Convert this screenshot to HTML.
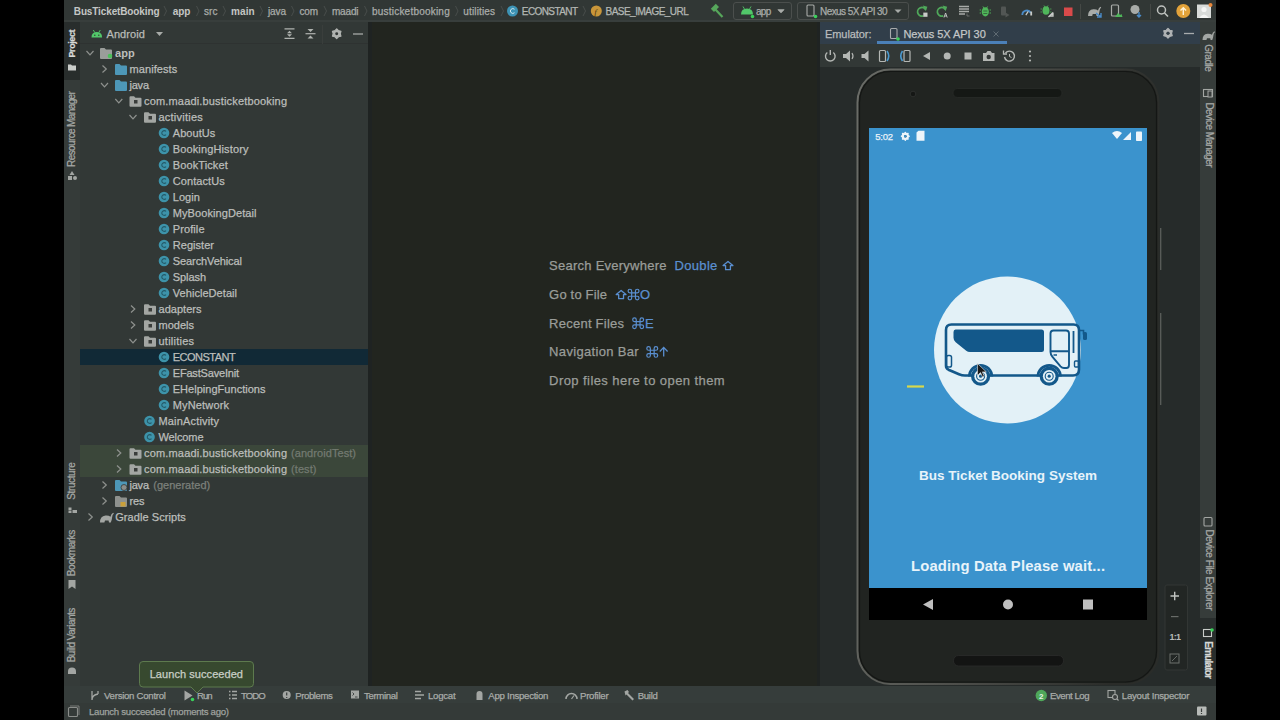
<!DOCTYPE html>
<html><head><meta charset="utf-8"><style>
html,body{margin:0;padding:0;width:1280px;height:720px;overflow:hidden;background:#000}
.r{position:absolute}
.t{position:absolute;white-space:nowrap;font-family:"Liberation Sans",sans-serif;-webkit-text-stroke:0.25px currentColor}
svg{position:absolute;left:0;top:0}
</style></head><body>
<div class="r" style="left:64px;top:0px;width:1152px;height:22px;background:#313735;"></div><div class="r" style="left:64px;top:20px;width:1152px;height:2px;background:#383e3c;"></div><div class="r" style="left:64px;top:22px;width:16px;height:664px;background:#353b39;"></div><div class="r" style="left:64px;top:22px;width:16px;height:58px;background:#282d2c;"></div><div class="r" style="left:80px;top:22px;width:288px;height:664px;background:#323836;"></div><div class="r" style="left:80px;top:43px;width:288px;height:1px;background:#2e3231;"></div><div class="r" style="left:80px;top:349px;width:288px;height:16px;background:#112936;"></div><div class="r" style="left:80px;top:445px;width:288px;height:32px;background:#3b473a;"></div><div class="r" style="left:368px;top:22px;width:452px;height:664px;background:#1f2322;"></div><div class="r" style="left:372px;top:22px;width:445px;height:664px;background:#22251f;"></div><div class="r" style="left:820px;top:22px;width:380px;height:22px;background:#313e4a;"></div><div class="r" style="left:877px;top:41px;width:130px;height:2.5px;background:#4b80b8;"></div><div class="r" style="left:820px;top:44px;width:380px;height:23px;background:#323836;"></div><div class="r" style="left:820px;top:67px;width:380px;height:619px;background:#262b2a;"></div><div class="r" style="left:1200px;top:22px;width:16px;height:664px;background:#363c3a;"></div><div class="r" style="left:1200px;top:618px;width:16px;height:68px;background:#282d2c;"></div><div class="r" style="left:64px;top:686px;width:1152px;height:17px;background:#363d3b;"></div><div class="r" style="left:64px;top:703px;width:1152px;height:17px;background:#343a38;"></div>
<svg width="1280" height="720"><polyline points="164,6 166.5,11 164,16" fill="none" stroke="#484d4b" stroke-width="1"/><polyline points="196.5,6 199.0,11 196.5,16" fill="none" stroke="#484d4b" stroke-width="1"/><polyline points="223,6 225.5,11 223,16" fill="none" stroke="#484d4b" stroke-width="1"/><polyline points="260,6 262.5,11 260,16" fill="none" stroke="#484d4b" stroke-width="1"/><polyline points="291.5,6 294.0,11 291.5,16" fill="none" stroke="#484d4b" stroke-width="1"/><polyline points="324,6 326.5,11 324,16" fill="none" stroke="#484d4b" stroke-width="1"/><polyline points="364.5,6 367.0,11 364.5,16" fill="none" stroke="#484d4b" stroke-width="1"/><polyline points="455.5,6 458.0,11 455.5,16" fill="none" stroke="#484d4b" stroke-width="1"/><polyline points="501,6 503.5,11 501,16" fill="none" stroke="#484d4b" stroke-width="1"/><polyline points="583,6 585.5,11 583,16" fill="none" stroke="#484d4b" stroke-width="1"/><circle cx="512.5" cy="11" r="5.5" fill="#3d93b5"/><path d="M514.5 9.3a2.4 2.4 0 1 0 0 3.4" fill="none" stroke="#cde6ee" stroke-width="1"/><circle cx="596.3" cy="11" r="5.5" fill="#c9963a"/><text x="594.3" y="14.5" font-family="Liberation Serif" font-style="italic" font-size="9" fill="#4a3610">f</text><path d="M715.5 9.5l7 7.5" stroke="#56a65b" stroke-width="2.2"/><path d="M710.8 8.8l5-5 3.2 3.2-5 5z" fill="#56a65b"/><rect x="733.5" y="2.5" width="58" height="17" rx="2.5" fill="none" stroke="#4b4f4d"/><path d="M741 14.5q0-6 6-6t6 6z" fill="#52c86a"/><path d="M743 6.5l1.4 2.4M751 6.5l-1.4 2.4" stroke="#52c86a" stroke-width="0.9"/><circle cx="752.5" cy="16.5" r="1.8" fill="#3ad15a"/><polyline points="777.5,9.5 781,13 784.5,9.5" fill="#a8aba8" stroke="none"/><path d="M777.5 9.5h7l-3.5 3.5z" fill="#a8aba8"/><rect x="797.5" y="2.5" width="111" height="17" rx="2.5" fill="none" stroke="#4b4f4d"/><rect x="807" y="5" width="7" height="11" rx="1" fill="none" stroke="#a8aba8" stroke-width="1.1"/><circle cx="815.5" cy="16.5" r="1.8" fill="#3ad15a"/><path d="M894.5 9.5h7l-3.5 3.5z" fill="#a8aba8"/><path d="M925.6 9.600000000000001A4.3 4.3 0 1 0 923.5 15.8" fill="none" stroke="#4fa85a" stroke-width="1.8"/><path d="M922.8 5.6000000000000005l4.6 1.2-1.6 4.4z" fill="#4fa85a"/><rect x="923.3" y="12.6" width="4.2" height="4.2" fill="#c9ccc9"/><path d="M945.4 9.600000000000001A4.3 4.3 0 1 0 943.3 15.8" fill="none" stroke="#4fa85a" stroke-width="1.8"/><path d="M942.5999999999999 5.6000000000000005l4.6 1.2-1.6 4.4z" fill="#4fa85a"/><path d="M944 17.5l1.6-4.5 1.6 4.5M944.6 16h2" fill="none" stroke="#c9ccc9" stroke-width="0.9"/><path d="M959 6.5h10M959 9h10M959 11.5h10M959 14h6" stroke="#a8aba8" stroke-width="1.3"/><path d="M967 13.5v2.5h2.5" fill="none" stroke="#6f7370" stroke-width="0.9"/><ellipse cx="985.3" cy="11.8" rx="3.6" ry="4.6" fill="#4fb65a"/><path d="M983 6.5l1 1.5M987.6 6.5l-1 1.5M981 10h-1.3M981 13h-1.3M989.6 10h1.3M989.6 13h1.3" stroke="#4fb65a" stroke-width="1"/><path d="M983.3 11h4M983.3 13.5h4" stroke="#2e4a30" stroke-width="0.7"/><rect x="1001" y="6.5" width="5" height="9" rx="1" fill="#525654"/><path d="M1005.5 12.5l4 2.5-4 2.5z" fill="#525654"/><path d="M1022.3 15a4.5 4.5 0 0 1 8.5-2" fill="none" stroke="#4a8bc8" stroke-width="1.8"/><path d="M1025.8 15.2l2.5-3.8" stroke="#c9ccc9" stroke-width="1.2"/><rect x="1030.3" y="11.5" width="1.8" height="4" fill="#c9ccc9"/><ellipse cx="1046" cy="10.5" rx="3.5" ry="4.3" fill="#4fb65a"/><path d="M1041.8 9h-1.2M1041.8 12h-1.2M1050.2 9h1.2M1050.2 12h1.2M1044 5.5l.8 1.3M1048 5.5l-.8 1.3" stroke="#4fb65a" stroke-width="0.9"/><path d="M1048.5 17l4.5-4.5M1053 12.5v3.5h-3.5" stroke="#c9ccc9" stroke-width="1.3" fill="none"/><rect x="1064" y="7.5" width="8.5" height="8.5" fill="#d94a4a"/><path d="M1080.5 4v15" stroke="#454946" stroke-width="1"/><path transform="translate(1088 16) scale(0.95)" d="M0 0q0-6.5 5.5-7q3.2-.3 5 1.2q.6-2.8 2.6-4l.8.9q-1.6 1.2-1.8 3.8q-.2 2.2-1.3 5.1h-1.8l-.4-2h-3.6l-.6 2z" fill="#a8aba8"/><path d="M0 0" fill="none"/><path d="M1096 13l5 4M1101 13v4h-4" stroke="#4a8bc8" stroke-width="1.4" fill="none"/><rect x="1111.5" y="5" width="7" height="11" rx="1" fill="none" stroke="#a8aba8" stroke-width="1.2"/><path d="M1115 17l3-4 2 2 1.5-1 1 3z" fill="#4fb65a"/><circle cx="1135" cy="9.5" r="4.5" fill="#a8aba8"/><path d="M1139 12v5M1137 15l2 2 2-2" stroke="#4a8bc8" stroke-width="1.4" fill="none"/><path d="M1150.5 4v15" stroke="#454946" stroke-width="1"/><circle cx="1161.5" cy="10" r="4" fill="none" stroke="#bfc2bf" stroke-width="1.5"/><path d="M1164.5 13l3.5 3.5" stroke="#bfc2bf" stroke-width="1.6"/><circle cx="1183.3" cy="11" r="7" fill="#e3a33a"/><path d="M1183.3 15v-7M1180.5 10.5l2.8-2.8 2.8 2.8" stroke="#fff3d6" stroke-width="1.4" fill="none"/><rect x="1197" y="4.5" width="14" height="13.5" fill="#d8dbd9"/><circle cx="1204" cy="9.5" r="2.6" fill="#f4f5f4"/><path d="M1199 18q5-7 10 0z" fill="#f4f5f4"/><circle cx="1210.5" cy="5" r="2" fill="#e8873a"/><path d="M68 64.5h3l1 1h4v5h-8z" fill="#c9ccc9"/><path d="M72 171l2.5 4h-5z" fill="#a3a6a3"/><rect x="68" y="176" width="4" height="4" fill="#a3a6a3"/><circle cx="75" cy="178" r="2" fill="#a3a6a3"/><rect x="68.5" y="507.5" width="3" height="3" fill="#a3a6a3"/><rect x="72.5" y="510" width="4.5" height="3" fill="#a3a6a3"/><rect x="68.5" y="511" width="3" height="2" fill="#a3a6a3"/><path d="M68.5 580h7v9l-3.5-2.5-3.5 2.5z" fill="#a3a6a3"/><path d="M68 674v-2.5a4 4 0 0 1 8 0v2.5z" fill="#a3a6a3"/><path d="M91.5 37.5q0-5.5 5.3-5.5t5.3 5.5z" fill="#52c86a"/><path d="M93.3 30l1.3 2.2M100.3 30l-1.3 2.2" stroke="#52c86a" stroke-width="0.9"/><circle cx="94.8" cy="35.3" r="0.7" fill="#333"/><circle cx="98.8" cy="35.3" r="0.7" fill="#333"/><path d="M156 32h7l-3.5 4z" fill="#a8aba8"/><path d="M284.5 28.9h10M284.5 38.4h10" stroke="#b0b3b0" stroke-width="1.2"/><path d="M287 33.2l2.5-2.5 2.5 2.5zM287 34.3l2.5 2.5 2.5-2.5z" fill="#b0b3b0"/><path d="M305.5 33.7h10" stroke="#b0b3b0" stroke-width="1.2"/><path d="M307.5 29h6l-3 3zM307.5 38.5h6l-3-3z" fill="#b0b3b0"/><path d="M322.5 25v19" stroke="#3a3e3c"/><polygon points="336.70,28.80 338.46,30.64 340.94,31.25 340.23,33.70 340.94,36.15 338.46,36.76 336.70,38.60 334.94,36.76 332.46,36.15 333.17,33.70 332.46,31.25 334.94,30.64" fill="#b0b3b0" stroke="#b0b3b0" stroke-width="1.2" stroke-linejoin="round"/><circle cx="336.7" cy="33.7" r="1.47" fill="#333736"/><path d="M353 34h10" stroke="#a8aba8" stroke-width="1.3"/><polyline points="86.5,51 90.0,54.8 93.5,51" fill="none" stroke="#8e918e" stroke-width="1.2"/><path d="M100 49.0q0-1 1-1h3.5l1.5 1.5h5q1 0 1 1v7.5q0 1-1 1h-10q-1 0-1-1z" fill="#9a9d9a"/><circle cx="110" cy="56" r="2.3" fill="#4bc05a"/><polyline points="102.5,65.5 106.3,69 102.5,72.5" fill="none" stroke="#8e918e" stroke-width="1.2"/><path d="M115 65.0q0-1 1-1h3.5l1.5 1.5h5q1 0 1 1v7.5q0 1-1 1h-10q-1 0-1-1z" fill="#4d97b8"/><polyline points="101,83 104.5,86.8 108,83" fill="none" stroke="#8e918e" stroke-width="1.2"/><path d="M115 81.0q0-1 1-1h3.5l1.5 1.5h5q1 0 1 1v7.5q0 1-1 1h-10q-1 0-1-1z" fill="#4d97b8"/><polyline points="115.3,99 118.8,102.8 122.3,99" fill="none" stroke="#8e918e" stroke-width="1.2"/><path d="M129.5 97.25q0-1 1-1h3.5l1.5 1.5h5q1 0 1 1v7.0q0 1-1 1h-10q-1 0-1-1z" fill="#a3a6a3"/><rect x="134.0" y="100" width="3.5" height="3.5" fill="#3a3d3b"/><polyline points="129.5,115 133.0,118.8 136.5,115" fill="none" stroke="#8e918e" stroke-width="1.2"/><path d="M144 113.25q0-1 1-1h3.5l1.5 1.5h5q1 0 1 1v7.0q0 1-1 1h-10q-1 0-1-1z" fill="#a3a6a3"/><rect x="148.5" y="116" width="3.5" height="3.5" fill="#3a3d3b"/><circle cx="164" cy="133" r="5.3" fill="#3d93aa"/><path d="M166 131.4a2.4 2.4 0 1 0 0 3.2" fill="none" stroke="#245a69" stroke-width="1.1"/><circle cx="164" cy="149" r="5.3" fill="#3d93aa"/><path d="M166 147.4a2.4 2.4 0 1 0 0 3.2" fill="none" stroke="#245a69" stroke-width="1.1"/><circle cx="164" cy="165" r="5.3" fill="#3d93aa"/><path d="M166 163.4a2.4 2.4 0 1 0 0 3.2" fill="none" stroke="#245a69" stroke-width="1.1"/><circle cx="164" cy="181" r="5.3" fill="#3d93aa"/><path d="M166 179.4a2.4 2.4 0 1 0 0 3.2" fill="none" stroke="#245a69" stroke-width="1.1"/><circle cx="164" cy="197" r="5.3" fill="#3d93aa"/><path d="M166 195.4a2.4 2.4 0 1 0 0 3.2" fill="none" stroke="#245a69" stroke-width="1.1"/><circle cx="164" cy="213" r="5.3" fill="#3d93aa"/><path d="M166 211.4a2.4 2.4 0 1 0 0 3.2" fill="none" stroke="#245a69" stroke-width="1.1"/><circle cx="164" cy="229" r="5.3" fill="#3d93aa"/><path d="M166 227.4a2.4 2.4 0 1 0 0 3.2" fill="none" stroke="#245a69" stroke-width="1.1"/><circle cx="164" cy="245" r="5.3" fill="#3d93aa"/><path d="M166 243.4a2.4 2.4 0 1 0 0 3.2" fill="none" stroke="#245a69" stroke-width="1.1"/><circle cx="164" cy="261" r="5.3" fill="#3d93aa"/><path d="M166 259.4a2.4 2.4 0 1 0 0 3.2" fill="none" stroke="#245a69" stroke-width="1.1"/><circle cx="164" cy="277" r="5.3" fill="#3d93aa"/><path d="M166 275.4a2.4 2.4 0 1 0 0 3.2" fill="none" stroke="#245a69" stroke-width="1.1"/><circle cx="164" cy="293" r="5.3" fill="#3d93aa"/><path d="M166 291.4a2.4 2.4 0 1 0 0 3.2" fill="none" stroke="#245a69" stroke-width="1.1"/><circle cx="164" cy="357" r="5.3" fill="#3d93aa"/><path d="M166 355.4a2.4 2.4 0 1 0 0 3.2" fill="none" stroke="#245a69" stroke-width="1.1"/><circle cx="164" cy="373" r="5.3" fill="#3d93aa"/><path d="M166 371.4a2.4 2.4 0 1 0 0 3.2" fill="none" stroke="#245a69" stroke-width="1.1"/><circle cx="164" cy="389" r="5.3" fill="#3d93aa"/><path d="M166 387.4a2.4 2.4 0 1 0 0 3.2" fill="none" stroke="#245a69" stroke-width="1.1"/><circle cx="164" cy="405" r="5.3" fill="#3d93aa"/><path d="M166 403.4a2.4 2.4 0 1 0 0 3.2" fill="none" stroke="#245a69" stroke-width="1.1"/><polyline points="131,305.5 134.8,309 131,312.5" fill="none" stroke="#8e918e" stroke-width="1.2"/><path d="M144 305.25q0-1 1-1h3.5l1.5 1.5h5q1 0 1 1v7.0q0 1-1 1h-10q-1 0-1-1z" fill="#a3a6a3"/><rect x="148.5" y="308" width="3.5" height="3.5" fill="#3a3d3b"/><polyline points="131,321.5 134.8,325 131,328.5" fill="none" stroke="#8e918e" stroke-width="1.2"/><path d="M144 321.25q0-1 1-1h3.5l1.5 1.5h5q1 0 1 1v7.0q0 1-1 1h-10q-1 0-1-1z" fill="#a3a6a3"/><rect x="148.5" y="324" width="3.5" height="3.5" fill="#3a3d3b"/><polyline points="129.5,339 133.0,342.8 136.5,339" fill="none" stroke="#8e918e" stroke-width="1.2"/><path d="M144 337.25q0-1 1-1h3.5l1.5 1.5h5q1 0 1 1v7.0q0 1-1 1h-10q-1 0-1-1z" fill="#a3a6a3"/><rect x="148.5" y="340" width="3.5" height="3.5" fill="#3a3d3b"/><circle cx="149.5" cy="421" r="5.3" fill="#3d93aa"/><path d="M151.5 419.4a2.4 2.4 0 1 0 0 3.2" fill="none" stroke="#245a69" stroke-width="1.1"/><circle cx="149.5" cy="437" r="5.3" fill="#3d93aa"/><path d="M151.5 435.4a2.4 2.4 0 1 0 0 3.2" fill="none" stroke="#245a69" stroke-width="1.1"/><polyline points="117,449.5 120.8,453 117,456.5" fill="none" stroke="#8e918e" stroke-width="1.2"/><path d="M129.5 449.25q0-1 1-1h3.5l1.5 1.5h5q1 0 1 1v7.0q0 1-1 1h-10q-1 0-1-1z" fill="#a3a6a3"/><rect x="134.0" y="452" width="3.5" height="3.5" fill="#3a3d3b"/><polyline points="117,465.5 120.8,469 117,472.5" fill="none" stroke="#8e918e" stroke-width="1.2"/><path d="M129.5 465.25q0-1 1-1h3.5l1.5 1.5h5q1 0 1 1v7.0q0 1-1 1h-10q-1 0-1-1z" fill="#a3a6a3"/><rect x="134.0" y="468" width="3.5" height="3.5" fill="#3a3d3b"/><polyline points="102.5,481.5 106.3,485 102.5,488.5" fill="none" stroke="#8e918e" stroke-width="1.2"/><path d="M115 481.0q0-1 1-1h3.5l1.5 1.5h5q1 0 1 1v7.5q0 1-1 1h-10q-1 0-1-1z" fill="#4d97b8"/><circle cx="124" cy="487.5" r="3" fill="#8a8d8a" stroke="#333736" stroke-width="0.8"/><polyline points="102.5,497.5 106.3,501 102.5,504.5" fill="none" stroke="#8e918e" stroke-width="1.2"/><path d="M115 497.0q0-1 1-1h3.5l1.5 1.5h5q1 0 1 1v7.5q0 1-1 1h-10q-1 0-1-1z" fill="#8e918e"/><rect x="120.5" y="502" width="5" height="4.5" fill="#c9a03a"/><polyline points="88.5,513.5 92.3,517 88.5,520.5" fill="none" stroke="#8e918e" stroke-width="1.2"/><path transform="translate(100 522.5) scale(1.0)" d="M0 0q0-6.5 5.5-7q3.2-.3 5 1.2q.6-2.8 2.6-4l.8.9q-1.6 1.2-1.8 3.8q-.2 2.2-1.3 5.1h-1.8l-.4-2h-3.6l-.6 2z" fill="#a3a6a3"/><path d="M143 661.5h107q3.5 0 3.5 3.5v18.5q0 3.5-3.5 3.5h-47l-6 6-6-6h-48q-3.5 0-3.5-3.5v-18.5q0-3.5 3.5-3.5z" fill="#37492f" stroke="#5d7a4e" stroke-width="1"/><path d="M92 691v9M92 700q0-5 6-6M98 691v3" fill="none" stroke="#a3a6a3" stroke-width="1.3"/><path d="M184.5 690.5l8 5-8 5z" fill="#a3a6a3"/><circle cx="192.5" cy="699.5" r="1.8" fill="#3ad15a"/><path d="M229 691.5h1.5M229 695h1.5M229 698.5h1.5M232 691.5h5M232 695h5M232 698.5h5" stroke="#a3a6a3" stroke-width="1.3"/><circle cx="286.7" cy="695" r="4" fill="#a3a6a3"/><path d="M286.7 692.5v3M286.7 697v1" stroke="#393d3c" stroke-width="1.2"/><rect x="351" y="690.5" width="8" height="8" fill="#a3a6a3"/><path d="M352.5 692.5l1.5 1.5-1.5 1.5M355 697h2.5" stroke="#393d3c" stroke-width="0.9" fill="none"/><path d="M415 691.5h6M415 695h9M415 698.5h6" stroke="#a3a6a3" stroke-width="1.3"/><path d="M476.5 700v-6q0-3 3-3t3 3v6z" fill="#a3a6a3"/><path d="M566 699a5.5 5.5 0 0 1 11 0" fill="none" stroke="#a3a6a3" stroke-width="1.5"/><path d="M571.5 699l2.5-3.5" stroke="#a3a6a3" stroke-width="1.2"/><path d="M624.5 691.5l3-1.5 1.5 2-1 1 6 6-1.5 1.5-6-6-1 1z" fill="#a3a6a3"/><circle cx="1041.3" cy="695.5" r="5.7" fill="#4fa85a"/><text x="1039" y="698.5" font-size="8" font-weight="bold" font-family="Liberation Sans" fill="#e8f4e8">2</text><rect x="1108" y="690.5" width="7" height="7" fill="none" stroke="#a3a6a3" stroke-width="1.1"/><circle cx="1115" cy="697" r="2.5" fill="#393d3c" stroke="#a3a6a3" stroke-width="1.1"/><path d="M1117 699l1.5 1.5" stroke="#a3a6a3" stroke-width="1.1"/><rect x="68.5" y="707.5" width="9" height="9" rx="1" fill="none" stroke="#8a8d8a" stroke-width="1.1"/><path d="M70 706h9v9" fill="none" stroke="#8a8d8a" stroke-width="0.8"/><rect x="1197" y="706.5" width="9.5" height="9" rx="1" fill="#b8bbb8"/><path d="M1201.5 708.5v3.5M1201.5 713v1" stroke="#393d3c" stroke-width="1.2"/><rect x="890.5" y="28.5" width="6.5" height="10" rx="1" fill="none" stroke="#a8abad" stroke-width="1.1"/><circle cx="898" cy="39" r="1.8" fill="#3ad15a"/><path d="M993.5 31.5l5 5M998.5 31.5l-5 5" stroke="#5f6a72" stroke-width="1"/><polygon points="1168.00,28.40 1169.76,30.24 1172.24,30.85 1171.53,33.30 1172.24,35.75 1169.76,36.36 1168.00,38.20 1166.24,36.36 1163.76,35.75 1164.47,33.30 1163.76,30.85 1166.24,30.24" fill="#b0b3b5" stroke="#b0b3b5" stroke-width="1.2" stroke-linejoin="round"/><circle cx="1168" cy="33.3" r="1.47" fill="#333736"/><circle cx="1168" cy="33.3" r="1.5" fill="#34404a"/><path d="M1184 33.5h10" stroke="#a8abad" stroke-width="1.3"/><path d="M827.3 52.5a4.8 4.8 0 1 0 6 0M830.3 50v5" fill="none" stroke="#b4b7b4" stroke-width="1.4"/><path d="M843 54h3l4-3.5v11l-4-3.5h-3z" fill="#b4b7b4"/><path d="M852 53q2 3 0 6" fill="none" stroke="#b4b7b4" stroke-width="1.2"/><path d="M861.5 54h3l4-3.5v11l-4-3.5h-3z" fill="#b4b7b4"/><rect x="879.5" y="50.5" width="6" height="11" rx="1" fill="none" stroke="#b4b7b4" stroke-width="1.2"/><path d="M887 51q3.5 5 0 10" fill="none" stroke="#4a9ad0" stroke-width="1.6"/><rect x="904" y="50.5" width="6" height="11" rx="1" fill="none" stroke="#b4b7b4" stroke-width="1.2"/><path d="M902.5 51q-3.5 5 0 10" fill="none" stroke="#4a9ad0" stroke-width="1.6"/><path d="M930 52v8l-7-4z" fill="#b4b7b4"/><circle cx="947.2" cy="56" r="3.5" fill="#b4b7b4"/><rect x="964.5" y="52.5" width="7" height="7" fill="#b4b7b4"/><path d="M983 53h3l1.5-2h3l1.5 2h2.5v8h-11.5z" fill="#b4b7b4"/><circle cx="988.7" cy="57" r="2.2" fill="#343837"/><path d="M1005.5 53a5 5 0 1 1 -1 4" fill="none" stroke="#b4b7b4" stroke-width="1.4"/><path d="M1003.5 50.5v3.5h3.5" fill="none" stroke="#b4b7b4" stroke-width="1.3"/><path d="M1009.5 54v2.5l2 1" fill="none" stroke="#b4b7b4" stroke-width="1"/><circle cx="1030" cy="51.5" r="1.1" fill="#b4b7b4"/><circle cx="1030" cy="56" r="1.1" fill="#b4b7b4"/><circle cx="1030" cy="60.5" r="1.1" fill="#b4b7b4"/><path transform="translate(1202.5 40) scale(0.9)" d="M0 0q0-6.5 5.5-7q3.2-.3 5 1.2q.6-2.8 2.6-4l.8.9q-1.6 1.2-1.8 3.8q-.2 2.2-1.3 5.1h-1.8l-.4-2h-3.6l-.6 2z" fill="#a3a6a3"/><rect x="1203.5" y="89.5" width="9" height="7" fill="none" stroke="#a3a6a3" stroke-width="1.1"/><rect x="1208" y="91" width="4" height="6" fill="#393d3c" stroke="#a3a6a3" stroke-width="1"/><rect x="1204" y="517.5" width="8" height="8.5" rx="1" fill="none" stroke="#a3a6a3" stroke-width="1.1"/><rect x="1203.5" y="629.5" width="8" height="7" fill="none" stroke="#c9ccc9" stroke-width="1.1"/><circle cx="1212" cy="630" r="1.8" fill="#3ad15a"/><defs><linearGradient id="rim" x1="0" y1="0" x2="1" y2="0.2"><stop offset="0" stop-color="#6a6c67"/><stop offset="0.5" stop-color="#4e4f4b"/><stop offset="1" stop-color="#2a2c29"/></linearGradient></defs><rect x="857.5" y="69.5" width="301" height="614.5" rx="33" fill="#212421" stroke="url(#rim)" stroke-width="2"/><rect x="859.5" y="71.5" width="297" height="610.5" rx="31" fill="none" stroke="#141614" stroke-width="1.2"/><rect x="953" y="88.5" width="109" height="9" rx="4.5" fill="#151815" stroke="#282b28" stroke-width="0.8"/><circle cx="913" cy="94" r="2.8" fill="#151715" stroke="#2c2e2c" stroke-width="1"/><rect x="953.5" y="655.5" width="110" height="10.5" rx="5" fill="#131413" stroke="#2b2c2b" stroke-width="0.8"/><path d="M1160.7 228v42M1160.7 313v92" stroke="#5b5e5b" stroke-width="1.3"/><rect x="869" y="128" width="278" height="460" fill="#3b93cd"/><rect x="869" y="588" width="278" height="32" fill="#000"/><path d="M933 599v11l-10-5.5z" fill="#bfbfbf"/><circle cx="1008" cy="604.5" r="5" fill="#bfbfbf"/><rect x="1083" y="599.5" width="10" height="10" fill="#bfbfbf"/><polygon points="905.30,132.30 906.40,133.64 908.13,133.47 907.96,135.20 909.30,136.30 907.96,137.40 908.13,139.13 906.40,138.96 905.30,140.30 904.20,138.96 902.47,139.13 902.64,137.40 901.30,136.30 902.64,135.20 902.47,133.47 904.20,133.64" fill="#eef5fa" stroke="#eef5fa" stroke-width="1.2" stroke-linejoin="round"/><circle cx="905.3" cy="136.3" r="1.20" fill="#333736"/><circle cx="905.3" cy="136.3" r="1.3" fill="#3b93cd"/><path d="M916.5 132.5l2-1.8h6v10h-8z" fill="#eef5fa"/><path d="M1112 133q5-4 10 0l-5 6z" fill="#eef5fa"/><path d="M1123 140l8-8v8z" fill="#eef5fa"/><rect x="1136" y="131.5" width="6" height="9.5" rx="0.8" fill="#eef5fa"/><circle cx="1007.5" cy="350" r="73.5" fill="#e3f1f7"/><path d="M951.5 324.5h122q5.5 0 5.5 5.5v39.5q0 6-6 6h-108q-3 0-6-1.3l-10.5-4.5q-2.5-1.2-2.5-4v-35.7q0-5.5 5.5-5.5z" fill="none" stroke="#13588a" stroke-width="2.6"/><path d="M955.5 329.5h86q2.5 0 2.5 2.5v17.5q0 2.5-2.5 2.5h-71.5q-2.2 0-3.8-1.3l-10.5-8.5q-2.2-1.8-2.2-4.5v-5.7q0-2.5 2-2.5z" fill="#13588a"/><path d="M1050.5 352v-18.5q0-3 3-3h12.5q3 0 3 3v31.5q0 3-2.5 3h-2.5q-2 0-3.5-1.7l-8-9.5q-2-2.3-2-4.8z M1050.5 351.3h18.5" fill="none" stroke="#13588a" stroke-width="1.9"/><path d="M1053.5 355h3.5" stroke="#13588a" stroke-width="1.5"/><path d="M1073.5 331v22" stroke="#13588a" stroke-width="1.8"/><rect x="1074.5" y="361" width="4" height="6" rx="1" fill="none" stroke="#13588a" stroke-width="1.4"/><path d="M1078 330.5h5.5v4" fill="none" stroke="#13588a" stroke-width="1.6"/><rect x="1083" y="332" width="4" height="8" rx="1.5" fill="#13588a"/><rect x="946.5" y="355.5" width="5" height="11.5" rx="1.8" fill="none" stroke="#13588a" stroke-width="1.5"/><path d="M969.4 376.5a11.2 11.2 0 0 1 22.4 0" fill="none" stroke="#13588a" stroke-width="2.8"/><circle cx="980.6" cy="376.2" r="9.6" fill="#13588a"/><circle cx="980.6" cy="376.2" r="6.3" fill="#e3f1f7"/><circle cx="980.6" cy="376.2" r="4" fill="none" stroke="#13588a" stroke-width="1.1"/><circle cx="980.6" cy="376.2" r="1.6" fill="#13588a"/><path d="M1038.0 376.5a11.2 11.2 0 0 1 22.4 0" fill="none" stroke="#13588a" stroke-width="2.8"/><circle cx="1049.2" cy="376.2" r="9.6" fill="#13588a"/><circle cx="1049.2" cy="376.2" r="6.3" fill="#e3f1f7"/><circle cx="1049.2" cy="376.2" r="4" fill="none" stroke="#13588a" stroke-width="1.1"/><circle cx="1049.2" cy="376.2" r="1.6" fill="#13588a"/><path d="M977.5 363.5v12l3-3 2 4.5 1.8-.8-2-4.3h4z" fill="#1a1a1a" stroke="#e8e8e8" stroke-width="0.6"/><path d="M907 386.5h17" stroke="#d8d84c" stroke-width="2.2"/><path d="M728.0 261.40000000000003L732.9 265.55H730.42V269.7H725.58V265.55H723.1Z" fill="none" stroke="#5a8fd0" stroke-width="1.3" stroke-linejoin="round"/><path d="M621.1 290.40000000000003L626.0 294.55H623.52V298.7H618.6800000000001V294.55H616.2Z" fill="none" stroke="#5a8fd0" stroke-width="1.3" stroke-linejoin="round"/><path d="M631.66 292.84000000000003H635.4399999999999V296.26H631.66Z M631.66 292.84000000000003V291.055 A1.7850000000000001 1.7850000000000001 0 1 0 629.875 292.84000000000003H631.66 M635.4399999999999 292.84000000000003V291.055 A1.7850000000000001 1.7850000000000001 0 1 1 637.2249999999999 292.84000000000003H635.4399999999999 M631.66 296.26V298.045 A1.7850000000000001 1.7850000000000001 0 1 1 629.875 296.26H631.66 M635.4399999999999 296.26V298.045 A1.7850000000000001 1.7850000000000001 0 1 0 637.2249999999999 296.26H635.4399999999999" fill="none" stroke="#5a8fd0" stroke-width="1.2"/><path d="M636.26 321.54H640.04V324.96H636.26Z M636.26 321.54V319.755 A1.7850000000000001 1.7850000000000001 0 1 0 634.475 321.54H636.26 M640.04 321.54V319.755 A1.7850000000000001 1.7850000000000001 0 1 1 641.8249999999999 321.54H640.04 M636.26 324.96V326.745 A1.7850000000000001 1.7850000000000001 0 1 1 634.475 324.96H636.26 M640.04 324.96V326.745 A1.7850000000000001 1.7850000000000001 0 1 0 641.8249999999999 324.96H640.04" fill="none" stroke="#5a8fd0" stroke-width="1.2"/><path d="M650.36 350.24H654.14V353.65999999999997H650.36Z M650.36 350.24V348.455 A1.7850000000000001 1.7850000000000001 0 1 0 648.575 350.24H650.36 M654.14 350.24V348.455 A1.7850000000000001 1.7850000000000001 0 1 1 655.925 350.24H654.14 M650.36 353.65999999999997V355.445 A1.7850000000000001 1.7850000000000001 0 1 1 648.575 353.65999999999997H650.36 M654.14 353.65999999999997V355.445 A1.7850000000000001 1.7850000000000001 0 1 0 655.925 353.65999999999997H654.14" fill="none" stroke="#5a8fd0" stroke-width="1.2"/><path d="M663.7 356.5V347.8M659.8 351.5L663.7 347.4L667.6 351.5" fill="none" stroke="#5a8fd0" stroke-width="1.3"/><rect x="1165" y="585" width="22.5" height="85" rx="2" fill="#222624" stroke="#323634" stroke-width="1"/><path d="M1170.5 596h8.5M1174.7 591.7v8.5" stroke="#c0c3c0" stroke-width="1.4"/><path d="M1171 616.6h7.5" stroke="#686b68" stroke-width="1.2"/><rect x="1170" y="654" width="9" height="9" fill="none" stroke="#6d706d" stroke-width="1"/><path d="M1172 661l5-5" stroke="#6d706d" stroke-width="0.9"/></svg>
<div class="t" style="left:73.80px;top:6.63px;font-size:10px;line-height:10px;font-weight:bold;color:#c4c6c4;letter-spacing:-0.127px;-webkit-text-stroke:0;">BusTicketBooking</div>
<div class="t" style="left:172.70px;top:6.63px;font-size:10px;line-height:10px;font-weight:bold;color:#c4c6c4;letter-spacing:-0.039px;-webkit-text-stroke:0;">app</div>
<div class="t" style="left:204.00px;top:6.63px;font-size:10px;line-height:10px;font-weight:normal;color:#a9aca9;letter-spacing:0.085px;">src</div>
<div class="t" style="left:231.00px;top:6.63px;font-size:10px;line-height:10px;font-weight:bold;color:#c4c6c4;letter-spacing:0.087px;-webkit-text-stroke:0;">main</div>
<div class="t" style="left:267.90px;top:6.63px;font-size:10px;line-height:10px;font-weight:normal;color:#a9aca9;letter-spacing:-0.082px;">java</div>
<div class="t" style="left:299.40px;top:6.63px;font-size:10px;line-height:10px;font-weight:normal;color:#a9aca9;letter-spacing:-0.146px;">com</div>
<div class="t" style="left:331.90px;top:6.63px;font-size:10px;line-height:10px;font-weight:normal;color:#a9aca9;letter-spacing:-0.134px;">maadi</div>
<div class="t" style="left:372.00px;top:6.63px;font-size:10px;line-height:10px;font-weight:normal;color:#a9aca9;letter-spacing:0.214px;">busticketbooking</div>
<div class="t" style="left:463.30px;top:6.63px;font-size:10px;line-height:10px;font-weight:normal;color:#a9aca9;letter-spacing:0.142px;">utilities</div>
<div class="t" style="left:521.80px;top:6.63px;font-size:10px;line-height:10px;font-weight:normal;color:#b4b7b4;letter-spacing:-0.591px;">ECONSTANT</div>
<div class="t" style="left:605.50px;top:6.63px;font-size:10px;line-height:10px;font-weight:normal;color:#b4b7b4;letter-spacing:-0.518px;">BASE_IMAGE_URL</div>
<div class="t" style="left:756.00px;top:6.84px;font-size:10px;line-height:10px;font-weight:normal;color:#a9aca9;letter-spacing:-0.692px;">app</div>
<div class="t" style="left:820.00px;top:6.84px;font-size:10px;line-height:10px;font-weight:normal;color:#a9aca9;letter-spacing:-0.568px;">Nexus 5X API 30</div>
<div class="t" style="left:106.50px;top:28.99px;font-size:11px;line-height:11px;font-weight:normal;color:#b9bbb8;letter-spacing:0.056px;">Android</div>
<div class="t" style="left:115.00px;top:48.19px;font-size:11px;line-height:11px;font-weight:bold;color:#bcbebb;letter-spacing:0.097px;-webkit-text-stroke:0;">app</div>
<div class="t" style="left:129.50px;top:64.19px;font-size:11px;line-height:11px;font-weight:normal;color:#bcbebb;letter-spacing:0.085px;">manifests</div>
<div class="t" style="left:129.50px;top:80.19px;font-size:11px;line-height:11px;font-weight:normal;color:#bcbebb;letter-spacing:-0.226px;">java</div>
<div class="t" style="left:144.00px;top:96.19px;font-size:11px;line-height:11px;font-weight:normal;color:#bcbebb;letter-spacing:0.168px;">com.maadi.busticketbooking</div>
<div class="t" style="left:158.50px;top:112.19px;font-size:11px;line-height:11px;font-weight:normal;color:#bcbebb;letter-spacing:0.230px;">activities</div>
<div class="t" style="left:172.75px;top:128.19px;font-size:11px;line-height:11px;font-weight:normal;color:#bcbebb;letter-spacing:0.052px;">AboutUs</div>
<div class="t" style="left:172.75px;top:144.19px;font-size:11px;line-height:11px;font-weight:normal;color:#bcbebb;letter-spacing:0.136px;">BookingHistory</div>
<div class="t" style="left:172.75px;top:160.19px;font-size:11px;line-height:11px;font-weight:normal;color:#bcbebb;letter-spacing:0.111px;">BookTicket</div>
<div class="t" style="left:172.75px;top:176.19px;font-size:11px;line-height:11px;font-weight:normal;color:#bcbebb;letter-spacing:0.081px;">ContactUs</div>
<div class="t" style="left:172.75px;top:192.19px;font-size:11px;line-height:11px;font-weight:normal;color:#bcbebb;letter-spacing:0.021px;">Login</div>
<div class="t" style="left:172.75px;top:208.19px;font-size:11px;line-height:11px;font-weight:normal;color:#bcbebb;letter-spacing:0.087px;">MyBookingDetail</div>
<div class="t" style="left:172.75px;top:224.19px;font-size:11px;line-height:11px;font-weight:normal;color:#bcbebb;letter-spacing:0.095px;">Profile</div>
<div class="t" style="left:172.75px;top:240.19px;font-size:11px;line-height:11px;font-weight:normal;color:#bcbebb;letter-spacing:0.041px;">Register</div>
<div class="t" style="left:172.75px;top:256.19px;font-size:11px;line-height:11px;font-weight:normal;color:#bcbebb;letter-spacing:-0.089px;">SearchVehical</div>
<div class="t" style="left:172.75px;top:272.19px;font-size:11px;line-height:11px;font-weight:normal;color:#bcbebb;letter-spacing:-0.077px;">Splash</div>
<div class="t" style="left:172.75px;top:288.19px;font-size:11px;line-height:11px;font-weight:normal;color:#bcbebb;letter-spacing:0.055px;">VehicleDetail</div>
<div class="t" style="left:158.50px;top:304.19px;font-size:11px;line-height:11px;font-weight:normal;color:#bcbebb;letter-spacing:0.027px;">adapters</div>
<div class="t" style="left:158.50px;top:320.19px;font-size:11px;line-height:11px;font-weight:normal;color:#bcbebb;letter-spacing:0.008px;">models</div>
<div class="t" style="left:158.50px;top:336.19px;font-size:11px;line-height:11px;font-weight:normal;color:#bcbebb;letter-spacing:0.235px;">utilities</div>
<div class="t" style="left:172.75px;top:352.19px;font-size:11px;line-height:11px;font-weight:normal;color:#bcbebb;letter-spacing:-0.503px;">ECONSTANT</div>
<div class="t" style="left:172.75px;top:368.19px;font-size:11px;line-height:11px;font-weight:normal;color:#bcbebb;letter-spacing:-0.186px;">EFastSaveInit</div>
<div class="t" style="left:172.75px;top:384.19px;font-size:11px;line-height:11px;font-weight:normal;color:#bcbebb;letter-spacing:0.026px;">EHelpingFunctions</div>
<div class="t" style="left:172.75px;top:400.19px;font-size:11px;line-height:11px;font-weight:normal;color:#bcbebb;letter-spacing:0.156px;">MyNetwork</div>
<div class="t" style="left:158.50px;top:416.19px;font-size:11px;line-height:11px;font-weight:normal;color:#bcbebb;letter-spacing:0.166px;">MainActivity</div>
<div class="t" style="left:158.50px;top:432.19px;font-size:11px;line-height:11px;font-weight:normal;color:#bcbebb;letter-spacing:-0.107px;">Welcome</div>
<div class="t" style="left:144.00px;top:448.19px;font-size:11px;line-height:11px;font-weight:normal;color:#bcbebb;letter-spacing:0.168px;">com.maadi.busticketbooking</div>
<div class="t" style="left:144.00px;top:464.19px;font-size:11px;line-height:11px;font-weight:normal;color:#bcbebb;letter-spacing:0.168px;">com.maadi.busticketbooking</div>
<div class="t" style="left:129.50px;top:480.19px;font-size:11px;line-height:11px;font-weight:normal;color:#bcbebb;letter-spacing:-0.226px;">java</div>
<div class="t" style="left:129.50px;top:496.19px;font-size:11px;line-height:11px;font-weight:normal;color:#bcbebb;letter-spacing:-0.140px;">res</div>
<div class="t" style="left:115.25px;top:512.19px;font-size:11px;line-height:11px;font-weight:normal;color:#bcbebb;letter-spacing:0.062px;">Gradle Scripts</div>
<div class="t" style="left:291.00px;top:448.19px;font-size:11px;line-height:11px;font-weight:normal;color:#737a71;letter-spacing:0.067px;">(androidTest)</div>
<div class="t" style="left:291.00px;top:464.19px;font-size:11px;line-height:11px;font-weight:normal;color:#737a71;letter-spacing:0.089px;">(test)</div>
<div class="t" style="left:153.25px;top:480.19px;font-size:11px;line-height:11px;font-weight:normal;color:#7c807b;letter-spacing:0.013px;">(generated)</div>
<div class="t" style="left:549.10px;top:259.00px;font-size:13px;line-height:13px;font-weight:normal;color:#9a9d99;letter-spacing:0.248px;">Search Everywhere</div>
<div class="t" style="left:674.60px;top:259.00px;font-size:13px;line-height:13px;font-weight:normal;color:#5a8fd0;letter-spacing:0.301px;">Double</div>
<div class="t" style="left:549.10px;top:287.80px;font-size:13px;line-height:13px;font-weight:normal;color:#9a9d99;letter-spacing:0.183px;">Go to File</div>
<div class="t" style="left:639.90px;top:287.80px;font-size:13px;line-height:13px;font-weight:normal;color:#5a8fd0;letter-spacing:-0.212px;">O</div>
<div class="t" style="left:549.10px;top:316.50px;font-size:13px;line-height:13px;font-weight:normal;color:#9a9d99;letter-spacing:0.241px;">Recent Files</div>
<div class="t" style="left:645.00px;top:316.50px;font-size:13px;line-height:13px;font-weight:normal;color:#5a8fd0;letter-spacing:-2.271px;">E</div>
<div class="t" style="left:549.10px;top:345.40px;font-size:13px;line-height:13px;font-weight:normal;color:#9a9d99;letter-spacing:0.333px;">Navigation Bar</div>
<div class="t" style="left:549.10px;top:374.20px;font-size:13px;line-height:13px;font-weight:normal;color:#9a9d99;letter-spacing:0.428px;">Drop files here to open them</div>
<div class="t" style="left:825.00px;top:28.89px;font-size:11px;line-height:11px;font-weight:normal;color:#b9bcbd;letter-spacing:-0.072px;">Emulator:</div>
<div class="t" style="left:903.40px;top:28.89px;font-size:11px;line-height:11px;font-weight:normal;color:#c3c6c7;letter-spacing:-0.055px;">Nexus 5X API 30</div>
<div class="t" style="left:875.30px;top:131.96px;font-size:9.5px;line-height:9.5px;font-weight:normal;color:#e8f1f8;letter-spacing:-0.230px;">5:02</div>
<div class="t" style="left:919.00px;top:469.17px;font-size:13.5px;line-height:13.5px;font-weight:bold;color:#e8f3fa;letter-spacing:0.019px;-webkit-text-stroke:0;">Bus Ticket Booking System</div>
<div class="t" style="left:911.00px;top:558.97px;font-size:14.8px;line-height:14.8px;font-weight:bold;color:#e8f3fa;letter-spacing:0.156px;-webkit-text-stroke:0;">Loading Data Please wait...</div>
<div class="t" style="left:104.00px;top:690.77px;font-size:9.6px;line-height:9.6px;font-weight:normal;color:#a8aba8;letter-spacing:-0.257px;">Version Control</div>
<div class="t" style="left:197.00px;top:690.77px;font-size:9.6px;line-height:9.6px;font-weight:normal;color:#a8aba8;letter-spacing:-1.050px;">Run</div>
<div class="t" style="left:241.00px;top:690.77px;font-size:9.6px;line-height:9.6px;font-weight:normal;color:#a8aba8;letter-spacing:-0.980px;">TODO</div>
<div class="t" style="left:295.30px;top:690.77px;font-size:9.6px;line-height:9.6px;font-weight:normal;color:#a8aba8;letter-spacing:-0.431px;">Problems</div>
<div class="t" style="left:364.00px;top:690.77px;font-size:9.6px;line-height:9.6px;font-weight:normal;color:#a8aba8;letter-spacing:-0.336px;">Terminal</div>
<div class="t" style="left:428.00px;top:690.77px;font-size:9.6px;line-height:9.6px;font-weight:normal;color:#a8aba8;letter-spacing:-0.241px;">Logcat</div>
<div class="t" style="left:488.30px;top:690.77px;font-size:9.6px;line-height:9.6px;font-weight:normal;color:#a8aba8;letter-spacing:-0.259px;">App Inspection</div>
<div class="t" style="left:580.00px;top:690.77px;font-size:9.6px;line-height:9.6px;font-weight:normal;color:#a8aba8;letter-spacing:-0.255px;">Profiler</div>
<div class="t" style="left:637.80px;top:690.77px;font-size:9.6px;line-height:9.6px;font-weight:normal;color:#a8aba8;letter-spacing:-0.333px;">Build</div>
<div class="t" style="left:1050.00px;top:690.77px;font-size:9.6px;line-height:9.6px;font-weight:normal;color:#a8aba8;letter-spacing:-0.463px;">Event Log</div>
<div class="t" style="left:1121.80px;top:690.77px;font-size:9.6px;line-height:9.6px;font-weight:normal;color:#a8aba8;letter-spacing:-0.222px;">Layout Inspector</div>
<div class="t" style="left:89.00px;top:706.77px;font-size:9.6px;line-height:9.6px;font-weight:normal;color:#9fa29f;letter-spacing:-0.266px;">Launch succeeded (moments ago)</div>
<div class="t" style="left:149.70px;top:668.69px;font-size:11px;line-height:11px;font-weight:normal;color:#c9cfc6;letter-spacing:0.063px;">Launch succeeded</div>
<div class="t" style="left:1169.50px;top:633.38px;font-size:9px;line-height:9px;font-weight:bold;color:#b8bbb8;letter-spacing:-0.754px;-webkit-text-stroke:0;">1:1</div>
<div class="t" style="left:58.00px;top:39.00px;width:48.00px;font-size:9px;line-height:9px;font-weight:bold;color:#d6d8d6;letter-spacing:-0.419px;transform-origin:14.00px 4.50px;transform:rotate(-90deg)">Project</div>
<div class="t" style="left:34.12px;top:124.12px;width:95.75px;font-size:10px;line-height:10px;font-weight:normal;color:#a6a9a6;letter-spacing:-0.620px;transform-origin:37.88px 5.00px;transform:rotate(-90deg)">Resource Manager</div>
<div class="t" style="left:53.25px;top:476.25px;width:57.50px;font-size:10px;line-height:10px;font-weight:normal;color:#a6a9a6;letter-spacing:-0.384px;transform-origin:18.75px 5.00px;transform:rotate(-90deg)">Structure</div>
<div class="t" style="left:48.85px;top:547.85px;width:66.30px;font-size:10px;line-height:10px;font-weight:normal;color:#a6a9a6;letter-spacing:-0.464px;transform-origin:23.15px 5.00px;transform:rotate(-90deg)">Bookmarks</div>
<div class="t" style="left:44.65px;top:630.15px;width:74.70px;font-size:10px;line-height:10px;font-weight:normal;color:#a6a9a6;letter-spacing:-0.481px;transform-origin:27.35px 5.00px;transform:rotate(-90deg)">Build Variants</div>
<div class="t" style="left:1194.25px;top:52.50px;width:47.50px;font-size:10px;line-height:10px;font-weight:normal;color:#a6a9a6;letter-spacing:-0.503px;transform-origin:13.75px 5.00px;transform:rotate(90deg)">Gradle</div>
<div class="t" style="left:1175.50px;top:130.00px;width:85.00px;font-size:10px;line-height:10px;font-weight:normal;color:#a6a9a6;letter-spacing:-0.601px;transform-origin:32.50px 5.00px;transform:rotate(90deg)">Device Manager</div>
<div class="t" style="left:1167.50px;top:564.50px;width:101.00px;font-size:10px;line-height:10px;font-weight:normal;color:#a6a9a6;letter-spacing:-0.446px;transform-origin:40.50px 5.00px;transform:rotate(90deg)">Device File Explorer</div>
<div class="t" style="left:1189.15px;top:655.15px;width:57.70px;font-size:10px;line-height:10px;font-weight:bold;color:#d6d8d6;letter-spacing:-0.806px;transform-origin:18.85px 5.00px;transform:rotate(90deg)">Emulator</div>
</body></html>
